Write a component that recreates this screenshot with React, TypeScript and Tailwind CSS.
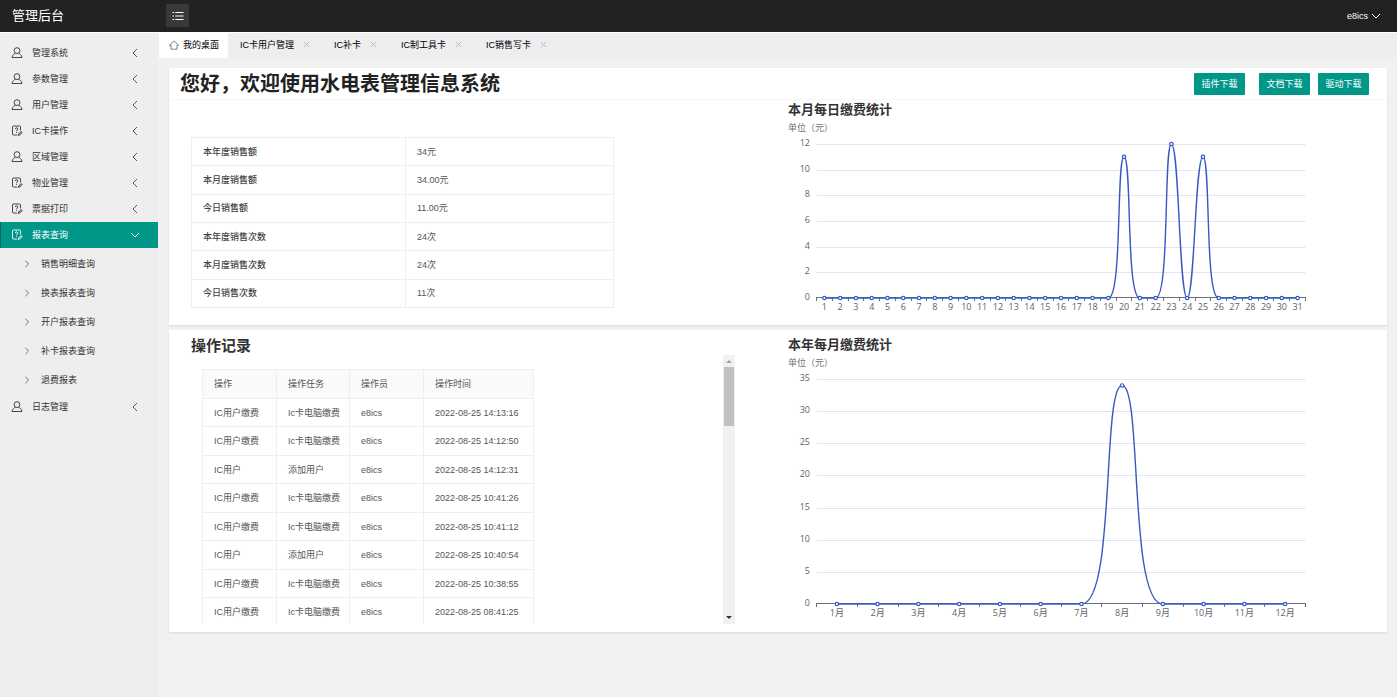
import { useState } from 'react'
import clsx from 'clsx'

type IconProps = { className?: string }

type MenuItem = {
  label: string
  icon: 'user' | 'template'
  children?: string[]
}

const menu: MenuItem[] = [
  { label: '管理系统', icon: 'user' },
  { label: '参数管理', icon: 'user' },
  { label: '用户管理', icon: 'user' },
  { label: 'IC卡操作', icon: 'template' },
  { label: '区域管理', icon: 'user' },
  { label: '物业管理', icon: 'template' },
  { label: '票据打印', icon: 'template' },
  {
    label: '报表查询',
    icon: 'template',
    children: [
      '销售明细查询',
      '换表报表查询',
      '开户报表查询',
      '补卡报表查询',
      '退费报表'
    ]
  },
  { label: '日志管理', icon: 'user' }
]

const tabs = ['IC卡用户管理', 'IC补卡', 'IC制工具卡', 'IC销售写卡']

const summary = [
  ['本年度销售额', '34元'],
  ['本月度销售额', '34.00元'],
  ['今日销售额', '11.00元'],
  ['本年度销售次数', '24次'],
  ['本月度销售次数', '24次'],
  ['今日销售次数', '11次']
]

const logs = [
  ['IC用户缴费', 'Ic卡电脑缴费', 'e8ics', '2022-08-25 14:13:16'],
  ['IC用户缴费', 'Ic卡电脑缴费', 'e8ics', '2022-08-25 14:12:50'],
  ['IC用户', '添加用户', 'e8ics', '2022-08-25 14:12:31'],
  ['IC用户缴费', 'Ic卡电脑缴费', 'e8ics', '2022-08-25 10:41:26'],
  ['IC用户缴费', 'Ic卡电脑缴费', 'e8ics', '2022-08-25 10:41:12'],
  ['IC用户', '添加用户', 'e8ics', '2022-08-25 10:40:54'],
  ['IC用户缴费', 'Ic卡电脑缴费', 'e8ics', '2022-08-25 10:38:55'],
  ['IC用户缴费', 'Ic卡电脑缴费', 'e8ics', '2022-08-25 08:41:25']
]

const paidByDay: Record<number, number> = { 20: 11, 23: 12, 25: 11 }
const days = Array.from({ length: 31 }, (_, i) => ({
  label: String(i + 1),
  value: paidByDay[i + 1] ?? 0
}))
const months = Array.from({ length: 12 }, (_, i) => ({
  label: `${i + 1}月`,
  value: i === 7 ? 34 : 0
}))

function UserIcon({ className }: IconProps) {
  return (
    <svg viewBox="0 0 12 12" fill="none" stroke="currentColor" strokeWidth="0.9" className={className}>
      <circle cx="6" cy="3.6" r="2.9" />
      <path
        d="M4.300 6C3.800 7.200 1.100 7.500 1 10.500h10C10.900 7.500 8.200 7.200 7.700 6"
        strokeLinejoin="round"
      />
    </svg>
  )
}

function TemplateIcon({ className }: IconProps) {
  return (
    <svg viewBox="0 0 12 12" fill="none" stroke="currentColor" className={className}>
      <path
        d="M9.500 5.500V1.900a.9.9 0 0 0-.9-.9H2.400a.9.9 0 0 0-.9.9v7.200a.9.9 0 0 0 .9.900H6"
        strokeWidth="0.9"
      />
      <path d="M4.300 3.900c.1-1.500 2.500-1.400 2.500 0 0 .9-1.200 1-1.200 2M5.600 6.800v1" />
      <path d="M7.200 10.500l.4-1.500 2.500-2.500 1.100 1.100-2.500 2.500z" fill="currentColor" fillOpacity="0.4" strokeWidth="0.8" />
    </svg>
  )
}

function HomeIcon({ className }: IconProps) {
  return (
    <svg viewBox="0 0 12 12" fill="none" stroke="currentColor" className={className}>
      <path d="M.6 6.300L6 1l5.400 5.300H9.600V11H2.400V6.300z" strokeLinejoin="round" />
    </svg>
  )
}

function ListIcon({ className }: IconProps) {
  return (
    <svg viewBox="0 0 12 10" fill="none" stroke="currentColor" strokeWidth="1.2" className={className}>
      <path d="M.5 1.500H2M.5 5H2M.5 8.500H2M3.200 1.500h8.300M3.200 5h8.300M3.200 8.500h8.300" />
    </svg>
  )
}

function Chevron({ className }: IconProps) {
  return (
    <svg viewBox="0 0 10 10" fill="none" stroke="currentColor" className={className}>
      <path d="M1 3l4 4 4-4" />
    </svg>
  )
}

function CloseIcon({ className }: IconProps) {
  return (
    <svg viewBox="0 0 8 8" fill="none" stroke="currentColor" className={className}>
      <path d="M1 1l6 6M7 1L1 7" />
    </svg>
  )
}

const clamp = (v: number, a: number, b: number) =>
  Math.max(Math.min(v, Math.max(a, b)), Math.min(a, b))

// Bezier through every point, handles kept inside the neighbouring values
function smoothPath(pts: number[][], smooth = 0.5) {
  let d = `M${pts[0][0]} ${pts[0][1]}`
  let cx0 = pts[0][0]
  let cy0 = pts[0][1]

  for (let i = 1; i < pts.length; i++) {
    const [x, y] = pts[i]
    const [px, py] = pts[i - 1]
    let cx1 = x
    let cy1 = y
    let nx0 = x
    let ny0 = y

    if (i < pts.length - 1) {
      const [nx, ny] = pts[i + 1]
      const lenPrev = Math.hypot(x - px, y - py)
      const lenNext = Math.hypot(nx - x, ny - y)
      const ratio = lenNext / (lenNext + lenPrev)

      nx0 = clamp(x + (nx - px) * smooth * ratio, nx, x)
      ny0 = clamp(y + (ny - py) * smooth * ratio, ny, y)
      cx1 = clamp(x - ((nx0 - x) * lenPrev) / lenNext, px, x)
      cy1 = clamp(y - ((ny0 - y) * lenPrev) / lenNext, py, y)
      nx0 = x + ((x - cx1) * lenNext) / lenPrev
      ny0 = y + ((y - cy1) * lenNext) / lenPrev
    }

    d += `C${cx0} ${cy0} ${cx1} ${cy1} ${x} ${y}`
    cx0 = nx0
    cy0 = ny0
  }
  return d
}

type ChartProps = {
  title: string
  data: { label: string; value: number }[]
  max: number
  step: number
  plotHeight: number
}

const CHART_WIDTH = 599
const LEFT = 28.5
const RIGHT = 517.5
const TOP = 8

function LineChart({ title, data, max, step, plotHeight }: ChartProps) {
  const band = (RIGHT - LEFT) / data.length
  const bottom = TOP + plotHeight
  const toY = (value: number) => bottom - (value / max) * plotHeight
  const points = data.map((d, i) => [LEFT + band * (i + 0.5), toY(d.value)])
  const marks = Array.from({ length: max / step + 1 }, (_, i) => i * step)

  return (
    <section className="pl-[10px]">
      <h3 className="text-[13px] leading-5 font-bold text-[#333]">{title}</h3>
      <p className="text-[9px] leading-4 text-[#6e7079]">单位（元）</p>
      <svg
        viewBox={`0 0 ${CHART_WIDTH} ${bottom + 18}`}
        className="block w-full font-['Open_Sans','Noto_Sans_CJK_SC',sans-serif] text-[9px]"
        role="img"
        aria-label={title}
      >
        {marks.map((mark) => (
          <g key={mark}>
            {mark > 0 && (
              <line
                x1={LEFT}
                x2={RIGHT}
                y1={Math.round(toY(mark)) + 0.5}
                y2={Math.round(toY(mark)) + 0.5}
                stroke="#e0e6f1"
              />
            )}
            <text x="22" y={toY(mark) + 2} textAnchor="end" fill="#5f616a">
              {mark}
            </text>
          </g>
        ))}
        <path
          d={`M${LEFT} ${bottom - 0.5}H${RIGHT}`}
          stroke="#6e7079"
          strokeWidth="1"
        />
        {Array.from({ length: data.length + 1 }, (_, i) => {
          const x = Math.floor(LEFT + band * i) + 0.5
          return (
            <line key={i} x1={x} x2={x} y1={bottom - 1} y2={bottom + 3} stroke="#6e7079" />
          )
        })}
        {data.map((d, i) => (
          <text
            key={d.label}
            x={points[i][0]}
            y={bottom + 12}
            textAnchor="middle"
            fill="#5f616a"
          >
            {d.label}
          </text>
        ))}
        <path d={smoothPath(points)} fill="none" stroke="#3559c4" strokeWidth="1.4" />
        {points.map(([x, y], i) => (
          <circle key={i} cx={x} cy={y} r="1.7" fill="#fff" stroke="#3559c4" strokeWidth="1.2" />
        ))}
      </svg>
    </section>
  )
}

function Sidebar() {
  const [open, setOpen] = useState('报表查询')

  return (
    <nav className="w-[159px] shrink-0 border-r border-[#f1f1f1] bg-[#eee] pt-[7px] text-[#333]">
      {menu.map((item) => {
        const active = item.label === open
        const Icon = item.icon === 'user' ? UserIcon : TemplateIcon
        return (
          <div key={item.label}>
            <button
              onClick={() => setOpen(active ? '' : item.label)}
              className={clsx(
                'flex h-[26px] w-full items-center border-l pr-[18px] pl-[10px]',
                active
                  ? 'border-[#006b61] bg-[#009688] text-white'
                  : 'border-transparent'
              )}
            >
              <Icon className="size-3" />
              <span className="ml-[9px] flex-1 text-left">{item.label}</span>
              <Chevron className={clsx('size-[10px]', !active && 'rotate-90 text-[#555]')} />
            </button>
            {active && item.children && (
              <ul className="pt-px">
                {item.children.map((child) => (
                  <li key={child}>
                    <a href="#" className="flex h-[29px] items-center pl-[23px]">
                      <Chevron className="size-2 -rotate-90 text-[#555]" />
                      <span className="ml-[10px]">{child}</span>
                    </a>
                  </li>
                ))}
              </ul>
            )}
          </div>
        )
      })}
    </nav>
  )
}

function TabBar() {
  return (
    <div className="flex h-[25px] bg-[#eeeef0] text-black">
      <button className="flex items-center gap-1 bg-white pr-[9px] pb-[2px] pl-[10px]">
        <HomeIcon className="size-[10px] text-[#666]" />
        我的桌面
      </button>
      {tabs.map((tab) => (
        <div key={tab} className="flex items-center gap-[9px] px-3 pb-[2px]">
          <button>{tab}</button>
          <button aria-label={`关闭${tab}`}>
            <CloseIcon className="size-[7px] text-[#b5b5b5]" />
          </button>
        </div>
      ))}
    </div>
  )
}

function SummaryTable() {
  return (
    <table className="h-[171px] w-[423px] border-collapse text-left">
      <tbody>
        {summary.map(([name, value]) => (
          <tr key={name}>
            <th className="w-[214px] border border-[#eee] px-[11px] font-medium text-[#444]">
              {name}
            </th>
            <td className="border border-[#eee] px-[11px]">{value}</td>
          </tr>
        ))}
      </tbody>
    </table>
  )
}

function LogTable() {
  return (
    <table className="w-[332px] table-fixed border-collapse text-left">
      <colgroup>
        <col className="w-[74px]" />
        <col className="w-[73px]" />
        <col className="w-[74px]" />
        <col />
      </colgroup>
      <thead className="bg-[#fafafa]">
        <tr className="h-[29px]">
          {['操作', '操作任务', '操作员', '操作时间'].map((head) => (
            <th key={head} className="border border-[#eee] px-[11px] font-normal">
              {head}
            </th>
          ))}
        </tr>
      </thead>
      <tbody className="[&>tr]:h-7 [&>tr:nth-child(even)]:h-[29px]">
        {logs.map((row) => (
          <tr key={row[3]}>
            {row.map((cell) => (
              <td
                key={cell}
                className="border border-[#eee] px-[11px] whitespace-nowrap"
              >
                {cell}
              </td>
            ))}
          </tr>
        ))}
      </tbody>
    </table>
  )
}

function Scrollbar() {
  return (
    <div className="flex w-3 flex-col items-center bg-[#f1f1f1]" aria-hidden="true">
      <svg viewBox="0 0 12 12" className="size-3 fill-[#a3a3a3]">
        <path d="M3 8l3-3 3 3z" />
      </svg>
      <div className="h-[59px] w-[10px] bg-[#c1c1c1]" />
      <svg viewBox="0 0 12 12" className="mt-auto size-3 fill-[#333]">
        <path d="M3 4l3 3 3-3z" />
      </svg>
    </div>
  )
}

const buttonClass = 'h-[22px] w-[51px] rounded-[1px] bg-[#009688] text-center text-white'

export default function App() {
  return (
    <div className="flex min-h-screen flex-col bg-[#f1f1f1] font-['Liberation_Sans','Noto_Sans_CJK_SC',sans-serif] text-[9px] leading-3 text-[#555]">
      <header className="flex h-[33px] items-center border-b border-white bg-[#222] pb-px text-white">
        <div className="w-[166px] pl-3 text-[13px] leading-5">管理后台</div>
        <button
          aria-label="菜单"
          className="flex h-[23px] w-[23px] items-center justify-center rounded-[1px] bg-[#393939]"
        >
          <ListIcon className="h-[10px] w-3" />
        </button>
        <button className="mr-4 ml-auto flex items-center gap-[3px]">
          e8ics
          <Chevron className="size-[10px]" />
        </button>
      </header>
      <div className="flex flex-1">
        <Sidebar />
        <main className="min-w-0 flex-1">
          <TabBar />
          <div className="flex flex-col gap-[5px] p-[10px]">
            <div className="bg-white shadow-[0_1px_2px_rgba(0,0,0,0.1)]">
              <div className="flex h-8 items-center border-b border-[#f6f6f6] pr-[18px] pl-[11px]">
                <h1 className="flex-1 text-[20px] leading-[30px] font-bold text-[#222]">
                  您好，欢迎使用水电表管理信息系统
                </h1>
                <button className={clsx(buttonClass, 'mr-[14px]')}>插件下载</button>
                <button className={clsx(buttonClass, 'mr-2')}>文档下载</button>
                <button className={buttonClass}>驱动下载</button>
              </div>
              <div className="grid grid-cols-2 pb-[9px]">
                <div className="pt-[37px] pl-[22px]">
                  <SummaryTable />
                </div>
                <LineChart
                  title="本月每日缴费统计"
                  data={days}
                  max={12}
                  step={2}
                  plotHeight={154}
                />
              </div>
            </div>
            <div className="grid grid-cols-2 bg-white pt-[5px] pb-2 shadow-[0_1px_2px_rgba(0,0,0,0.1)]">
              <section>
                <h2 className="pt-[2px] pl-[22px] text-[15px] leading-[18px] font-bold text-[#333]">
                  操作记录
                </h2>
                <div className="flex h-[269px] justify-between overflow-hidden pr-[43px] pl-[33px]">
                  <div className="pt-[14px]">
                    <LogTable />
                  </div>
                  <Scrollbar />
                </div>
              </section>
              <LineChart
                title="本年每月缴费统计"
                data={months}
                max={35}
                step={5}
                plotHeight={225}
              />
            </div>
          </div>
        </main>
      </div>
    </div>
  )
}
